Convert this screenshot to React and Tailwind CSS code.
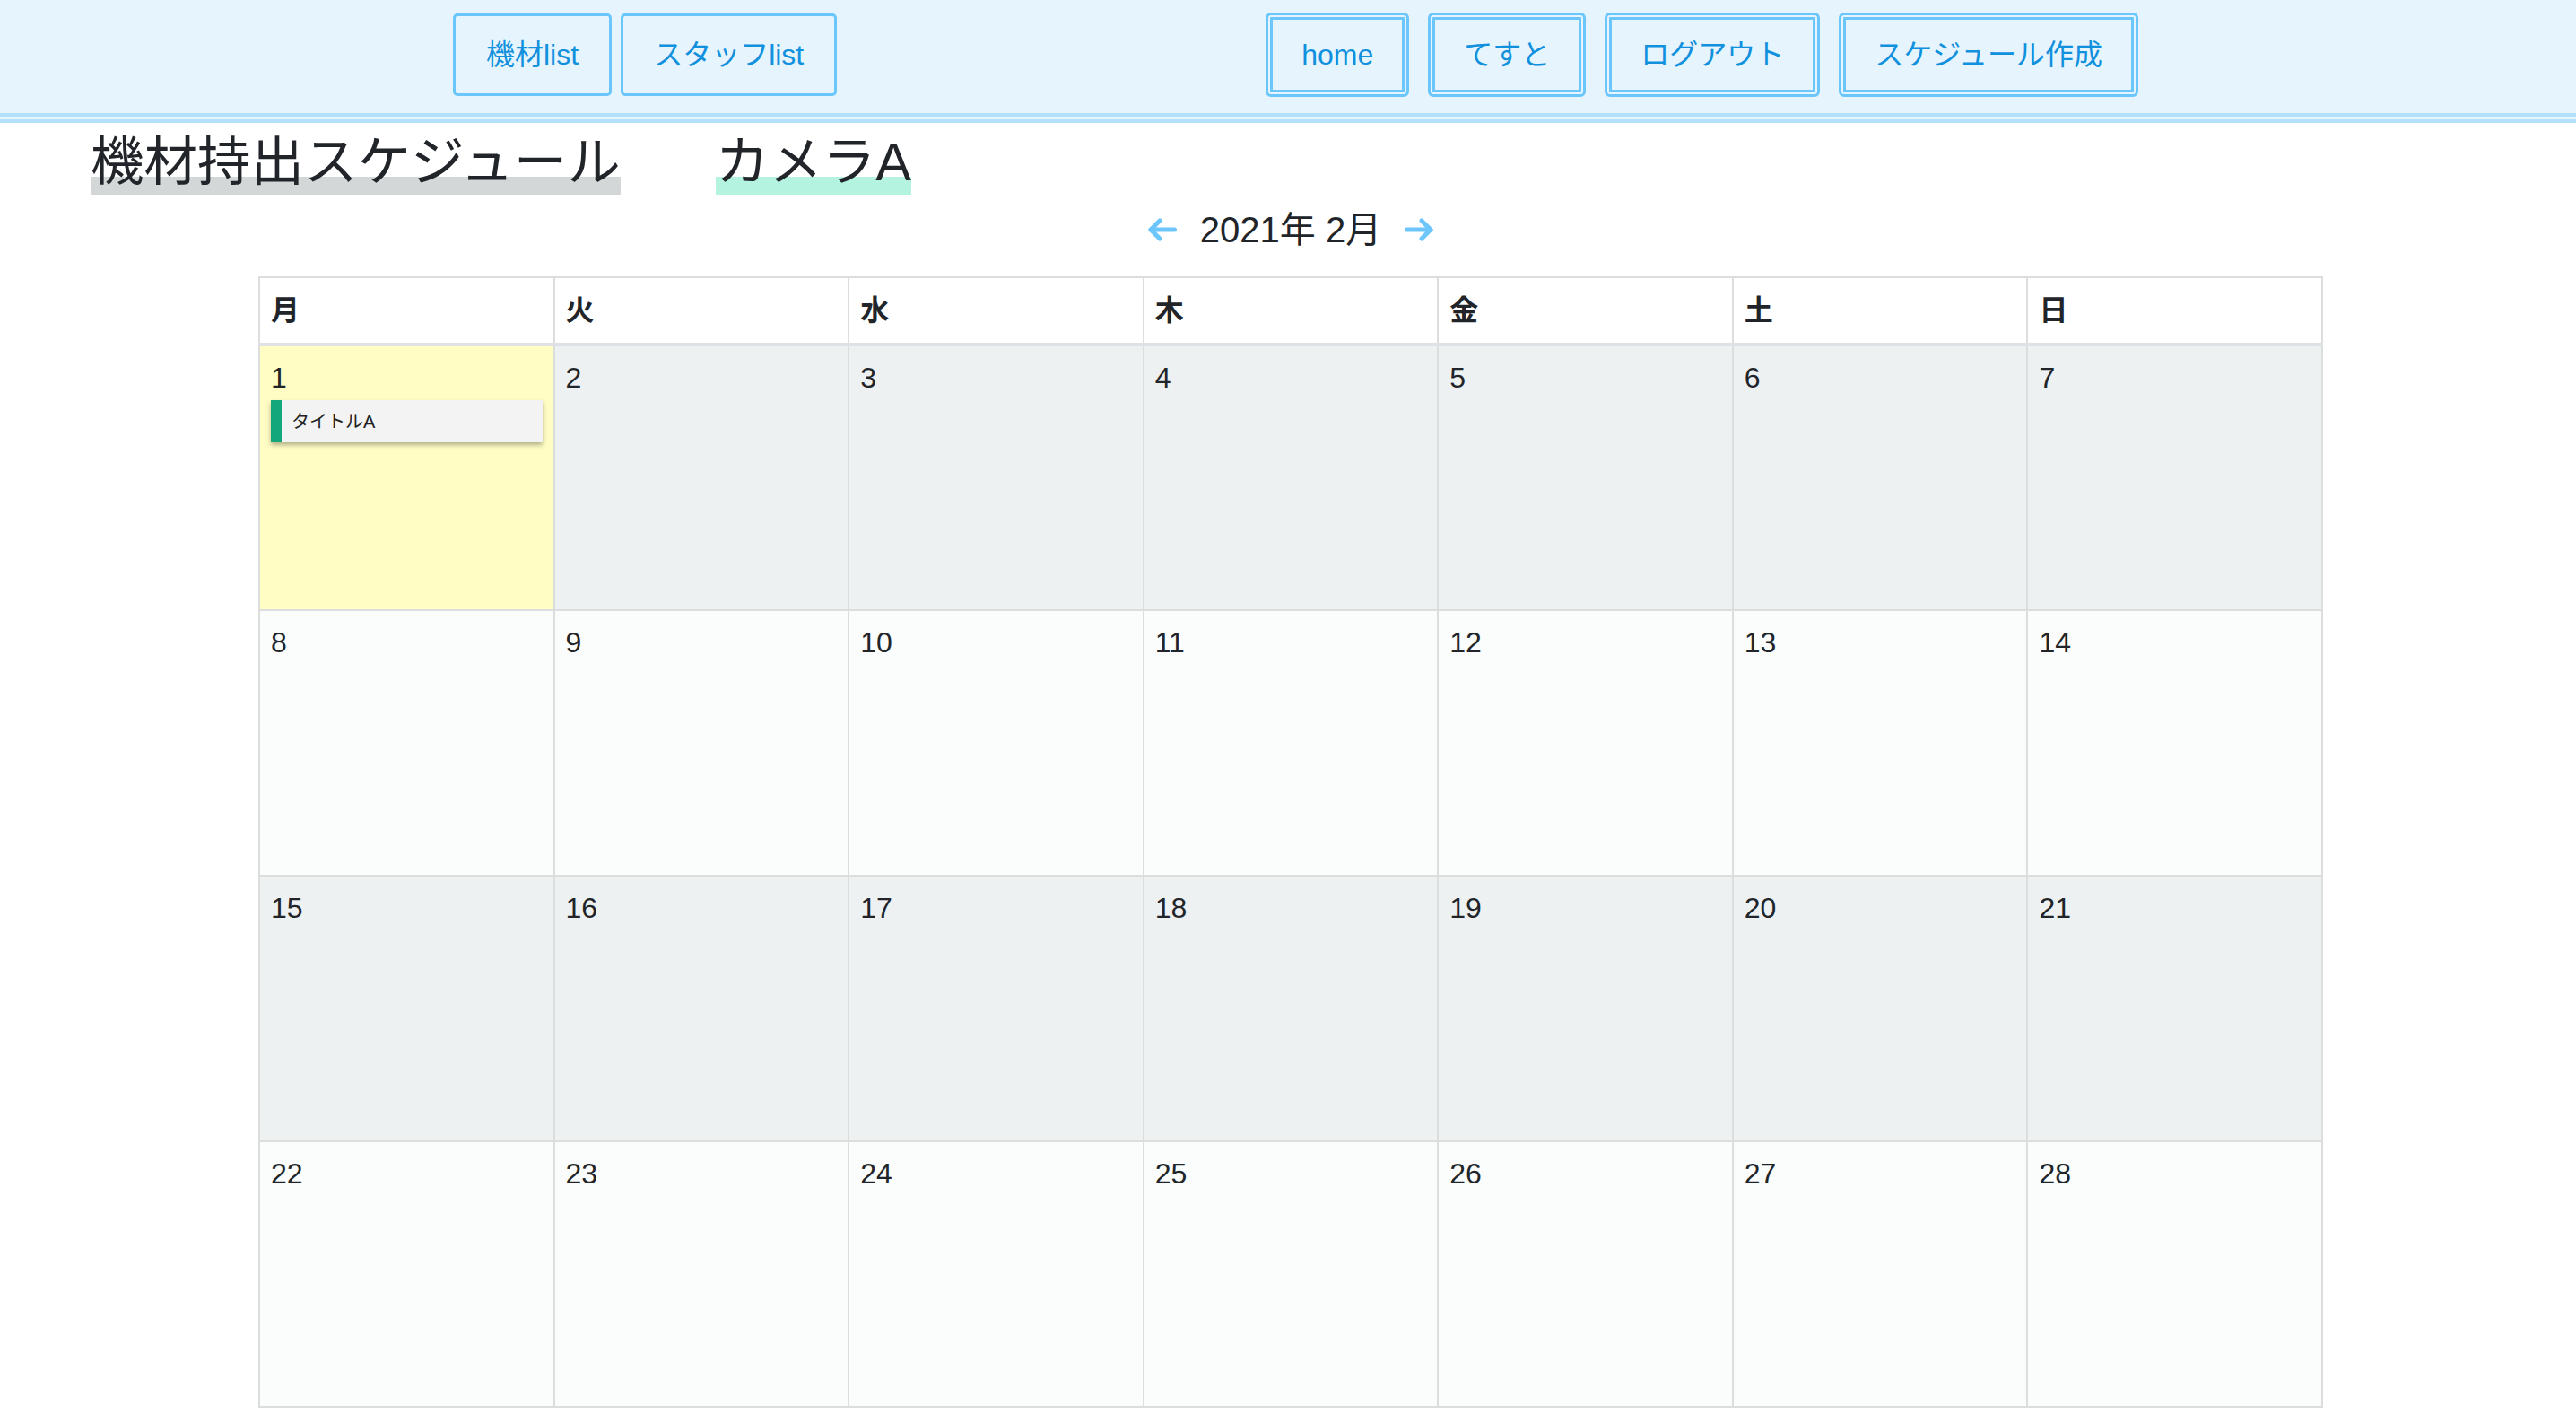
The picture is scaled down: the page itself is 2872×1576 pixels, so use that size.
import React from 'react';

const FONT = { fontFamily: '"Liberation Sans", "Noto Sans CJK JP", sans-serif' };

const leftLinks = ['機材list', 'スタッフlist'];
const rightLinks = ['home', 'てすと', 'ログアウト', 'スケジュール作成'];
const weekdays = ['月', '火', '水', '木', '金', '土', '日'];

// Feb 2021 starts on a Monday, 28 days -> 4 full weeks
const weeks = [0, 1, 2, 3].map((w) => [1, 2, 3, 4, 5, 6, 7].map((d) => w * 7 + d));

const events = { 1: ['タイトルA'] };

function Arrow({ dir }) {
  return (
    <svg width="32" height="26" viewBox="0 0 32 26" fill="none" stroke="#6cc5fb" strokeWidth="5" strokeLinecap="round" strokeLinejoin="round">
      {dir === 'left' ? (
        <>
          <path d="M3 13H29.5" />
          <path d="M13 3 3 13l10 10" />
        </>
      ) : (
        <>
          <path d="M29 13H2.5" />
          <path d="M19 3l10 10-10 10" />
        </>
      )}
    </svg>
  );
}

export default function App() {
  return (
    <div className="min-h-screen bg-white text-[#212529]" style={FONT}>
      {/* header nav */}
      <div className="h-[137px] bg-[#e6f5fd] border-b-[11px] border-double border-[#b3e0fa] flex items-center pb-[4px] pl-[505px]">
        <div className="flex gap-[10px]">
          {leftLinks.map((l) => (
            <button
              key={l}
              className="px-[34px] py-[19px] border-[3px] border-[#6ac6fb] rounded-[5px] text-[32px] leading-[48px] text-[#1190dd]"
            >
              {l}
            </button>
          ))}
        </div>
        <div className="flex gap-[21px] ml-[478px]">
          {rightLinks.map((l) => (
            <button
              key={l}
              className="px-[32px] py-[15px] border-[8px] border-double border-[#6ac6fb] rounded-[6px] text-[32px] leading-[48px] text-[#1190dd]"
            >
              {l}
            </button>
          ))}
        </div>
      </div>

      {/* title */}
      <div className="flex gap-[106px] pl-[101px] mt-[8px]">
        <span className="inline-block text-[59.5px] leading-[72px] bg-[linear-gradient(transparent_72%,#d3d7d7_72%)]">
          機材持出スケジュール
        </span>
        <span className="inline-block text-[59.5px] leading-[72px] bg-[linear-gradient(transparent_72%,#b4f3df_72%)]">
          カメラA
        </span>
      </div>

      {/* month switcher */}
      <div className="flex items-center justify-center gap-[26px] mt-[10px] h-[58px] pl-[6px]">
        <Arrow dir="left" />
        <span className="text-[40px] leading-[58px]">2021年 2月</span>
        <Arrow dir="right" />
      </div>

      {/* calendar */}
      <table className="w-[2302px] ml-[288px] mt-[23px] table-fixed border-collapse">
        <thead>
          <tr>
            {weekdays.map((d) => (
              <th
                key={d}
                className="bg-white border-2 border-[#dcdddd] border-b-4 border-b-[#dee2e6] px-3 py-3 text-left text-[32px] leading-[48px] font-bold"
              >
                {d}
              </th>
            ))}
          </tr>
        </thead>
        <tbody>
          {weeks.map((week, wi) => (
            <tr key={wi}>
              {week.map((day) => {
                const bg = day === 1 ? 'bg-[#fffdc4]' : wi % 2 === 0 ? 'bg-[#edf1f2]' : 'bg-[#fbfdfd]';
                return (
                  <td key={day} className={`${bg} border-2 border-[#dcdddd] h-[296px] align-top px-3 pt-[11px]`}>
                    <div className="text-[32px] leading-[48px]">{day}</div>
                    {(events[day] || []).map((ev) => (
                      <div
                        key={ev}
                        className="mt-[1px] h-[47px] flex items-center bg-[#f3f3f3] border-l-[12px] border-[#14a77b] pl-[11px] text-[20px] text-[#222] shadow-[0_3px_5px_rgba(0,0,0,0.3)]"
                      >
                        {ev}
                      </div>
                    ))}
                  </td>
                );
              })}
            </tr>
          ))}
        </tbody>
      </table>
    </div>
  );
}
